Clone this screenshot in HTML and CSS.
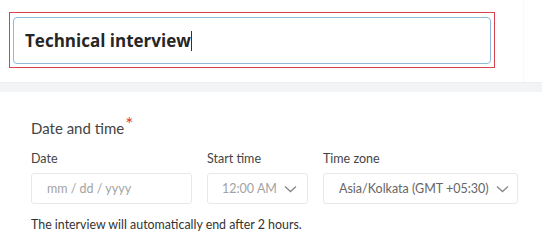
FILE: index.html
```html
<!DOCTYPE html>
<html lang="en">
<head>
    <meta charset="UTF-8">
    <meta name="viewport" content="width=device-width, initial-scale=1.0">
    <title>Interview</title>
    <link rel="stylesheet" href="styles.css">
</head>
<body>
    <div class="top">
        <div class="highlight">
            <div class="title-input">Technical interview<span class="caret"></span></div>
        </div>
    </div>
    <div class="band"></div>
    <div class="card">
        <h3 class="section">Date and time<span class="req">*</span></h3>
        <div class="fields">
            <div class="field">
                <label>Date</label>
                <div class="box date">mm / dd / yyyy</div>
            </div>
            <div class="field">
                <label>Start time</label>
                <div class="box time">12:00 AM
                    <svg class="chev" width="13" height="8" viewBox="0 0 13 8"><path d="M1 1.5 L6.5 6.5 L12 1.5" fill="none" stroke="#888" stroke-width="1.3"/></svg>
                </div>
            </div>
            <div class="field">
                <label>Time zone</label>
                <div class="box zone">Asia/Kolkata (GMT +05:30)
                    <svg class="chev" width="13" height="8" viewBox="0 0 13 8"><path d="M1 1.5 L6.5 6.5 L12 1.5" fill="none" stroke="#888" stroke-width="1.3"/></svg>
                </div>
            </div>
        </div>
        <p class="note">The interview will automatically end after 2 hours.</p>
    </div>
</body>
</html>
```

FILE: styles.css
```css
body {
    margin: 0;
    font-family: Lato, "Open Sans", sans-serif;
    background: #fff;
    width: 542px;
    height: 244px;
    overflow: hidden;
}
.top {
    height: 82px;
    padding: 12px 0 0 9px;
    box-sizing: border-box;
    border-right: 1px solid #f8f8f9;
    width: 524px;
}
.highlight {
    width: 486px;
    height: 56px;
    border: 1px solid #d8414f;
    box-sizing: border-box;
    padding: 4px 3px;
}
.title-input {
    height: 47px;
    box-sizing: border-box;
    border: 1px solid #8dbbd8;
    border-radius: 4px;
    padding: 0 0 0 11px;
    display: flex;
    align-items: center;
    font-family: "Open Sans", sans-serif;
    font-weight: 700;
    font-size: 17px;
    color: #262626;
}
.caret {
    display: inline-block;
    width: 1px;
    height: 20px;
    background: #333;
}
.band {
    height: 10px;
    background: #f3f4f6;
    border-top: 1px solid #eceef1;
    box-sizing: border-box;
}
.card {
    padding: 27px 0 0 31px;
}
.section {
    margin: 0;
    font-size: 15px;
    font-weight: 400;
    color: #444;
    line-height: 18px;
}
.req {
    color: #e0393e;
    font-size: 19px;
    line-height: 10px;
    vertical-align: 3px;
    margin-left: 1px;
}
.fields {
    display: flex;
    gap: 15px;
    margin-top: 14px;
}
.field label {
    display: block;
    font-size: 12.5px;
    color: #444;
    line-height: 16px;
    margin-bottom: 6px;
}
.box {
    height: 31px;
    box-sizing: border-box;
    border: 1px solid #e8e8e8;
    border-radius: 3px;
    display: flex;
    align-items: center;
    font-size: 12.5px;
    color: #a3a3a3;
    white-space: nowrap;
}
.date {
    width: 161px;
    padding-left: 15px;
}
.time {
    width: 101px;
    padding-left: 14px;
}
.zone {
    width: 195px;
    padding-left: 15px;
    color: #666;
}
.chev {
    margin-left: 7px;
}
.note {
    margin: 13px 0 0;
    font-size: 12.4px;
    color: #333;
}
```
